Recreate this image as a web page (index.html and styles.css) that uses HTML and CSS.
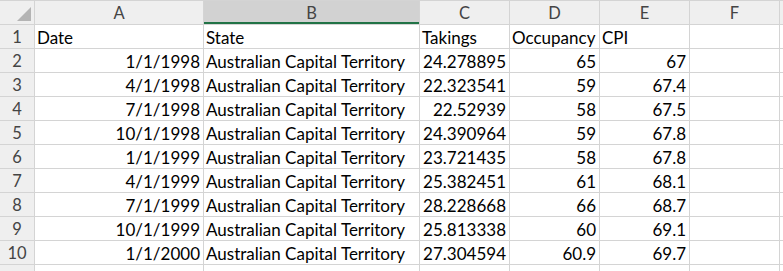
FILE: index.html
```html
<!DOCTYPE html>
<html>
<head>
<meta charset="utf-8">
<link rel="stylesheet" href="styles.css">
</head>
<body>
<div class="sheet">
  <div class="corner"><span class="tri"></span></div>
  <div class="ch">A</div>
  <div class="ch sel">B</div>
  <div class="ch">C</div>
  <div class="ch">D</div>
  <div class="ch">E</div>
  <div class="ch">F</div>
  <div class="ch"></div>

  <div class="rh">1</div><div class="c">Date</div><div class="c">State</div><div class="c">Takings</div><div class="c">Occupancy</div><div class="c">CPI</div><div class="c"></div><div class="c"></div>
  <div class="rh">2</div><div class="c n">1/1/1998</div><div class="c">Australian Capital Territory</div><div class="c n">24.278895</div><div class="c n">65</div><div class="c n">67</div><div class="c"></div><div class="c"></div>
  <div class="rh">3</div><div class="c n">4/1/1998</div><div class="c">Australian Capital Territory</div><div class="c n">22.323541</div><div class="c n">59</div><div class="c n">67.4</div><div class="c"></div><div class="c"></div>
  <div class="rh">4</div><div class="c n">7/1/1998</div><div class="c">Australian Capital Territory</div><div class="c n">22.52939</div><div class="c n">58</div><div class="c n">67.5</div><div class="c"></div><div class="c"></div>
  <div class="rh">5</div><div class="c n">10/1/1998</div><div class="c">Australian Capital Territory</div><div class="c n">24.390964</div><div class="c n">59</div><div class="c n">67.8</div><div class="c"></div><div class="c"></div>
  <div class="rh">6</div><div class="c n">1/1/1999</div><div class="c">Australian Capital Territory</div><div class="c n">23.721435</div><div class="c n">58</div><div class="c n">67.8</div><div class="c"></div><div class="c"></div>
  <div class="rh">7</div><div class="c n">4/1/1999</div><div class="c">Australian Capital Territory</div><div class="c n">25.382451</div><div class="c n">61</div><div class="c n">68.1</div><div class="c"></div><div class="c"></div>
  <div class="rh">8</div><div class="c n">7/1/1999</div><div class="c">Australian Capital Territory</div><div class="c n">28.228668</div><div class="c n">66</div><div class="c n">68.7</div><div class="c"></div><div class="c"></div>
  <div class="rh">9</div><div class="c n">10/1/1999</div><div class="c">Australian Capital Territory</div><div class="c n">25.813338</div><div class="c n">60</div><div class="c n">69.1</div><div class="c"></div><div class="c"></div>
  <div class="rh">10</div><div class="c n">1/1/2000</div><div class="c">Australian Capital Territory</div><div class="c n">27.304594</div><div class="c n">60.9</div><div class="c n">69.7</div><div class="c"></div><div class="c"></div>
  <div class="rh"></div><div class="c"></div><div class="c"></div><div class="c"></div><div class="c"></div><div class="c"></div><div class="c"></div><div class="c"></div>
</div>
</body>
</html>
```

FILE: styles.css
```css
html, body {
  margin: 0;
  padding: 0;
  background: #ffffff;
  overflow: hidden;
}

.sheet {
  display: grid;
  grid-template-columns: 34px 168px 215px 89px 89px 89px 89px 10px;
  grid-auto-rows: 23px;
  gap: 1px;
  padding-top: 1px;
  background: #d4d4d4;
  font-family: Lato, "Open Sans", sans-serif;
  font-size: 17px;
  color: #000000;
  width: 783px;
  height: 270px;
  overflow: hidden;
}

.corner {
  background: #efefef;
  position: relative;
}

.tri {
  position: absolute;
  right: 3px;
  bottom: 3px;
  width: 0;
  height: 0;
  border-left: 14px solid transparent;
  border-bottom: 14px solid #b4b4b4;
}

.ch {
  background: #efefef;
  color: #444444;
  text-align: center;
  line-height: 24px;
  font-size: 16.5px;
}

.ch.sel {
  background: #d2d2d2;
  box-shadow: inset 0 -2px 0 #217346;
}

.rh {
  background: #efefef;
  color: #444444;
  text-align: center;
  line-height: 25px;
  font-size: 16.5px;
}

.c {
  background: #ffffff;
  line-height: 25px;
  padding: 0 2px;
  white-space: nowrap;
  overflow: hidden;
}

.c.n {
  text-align: right;
  padding-right: 3px;
}
```
